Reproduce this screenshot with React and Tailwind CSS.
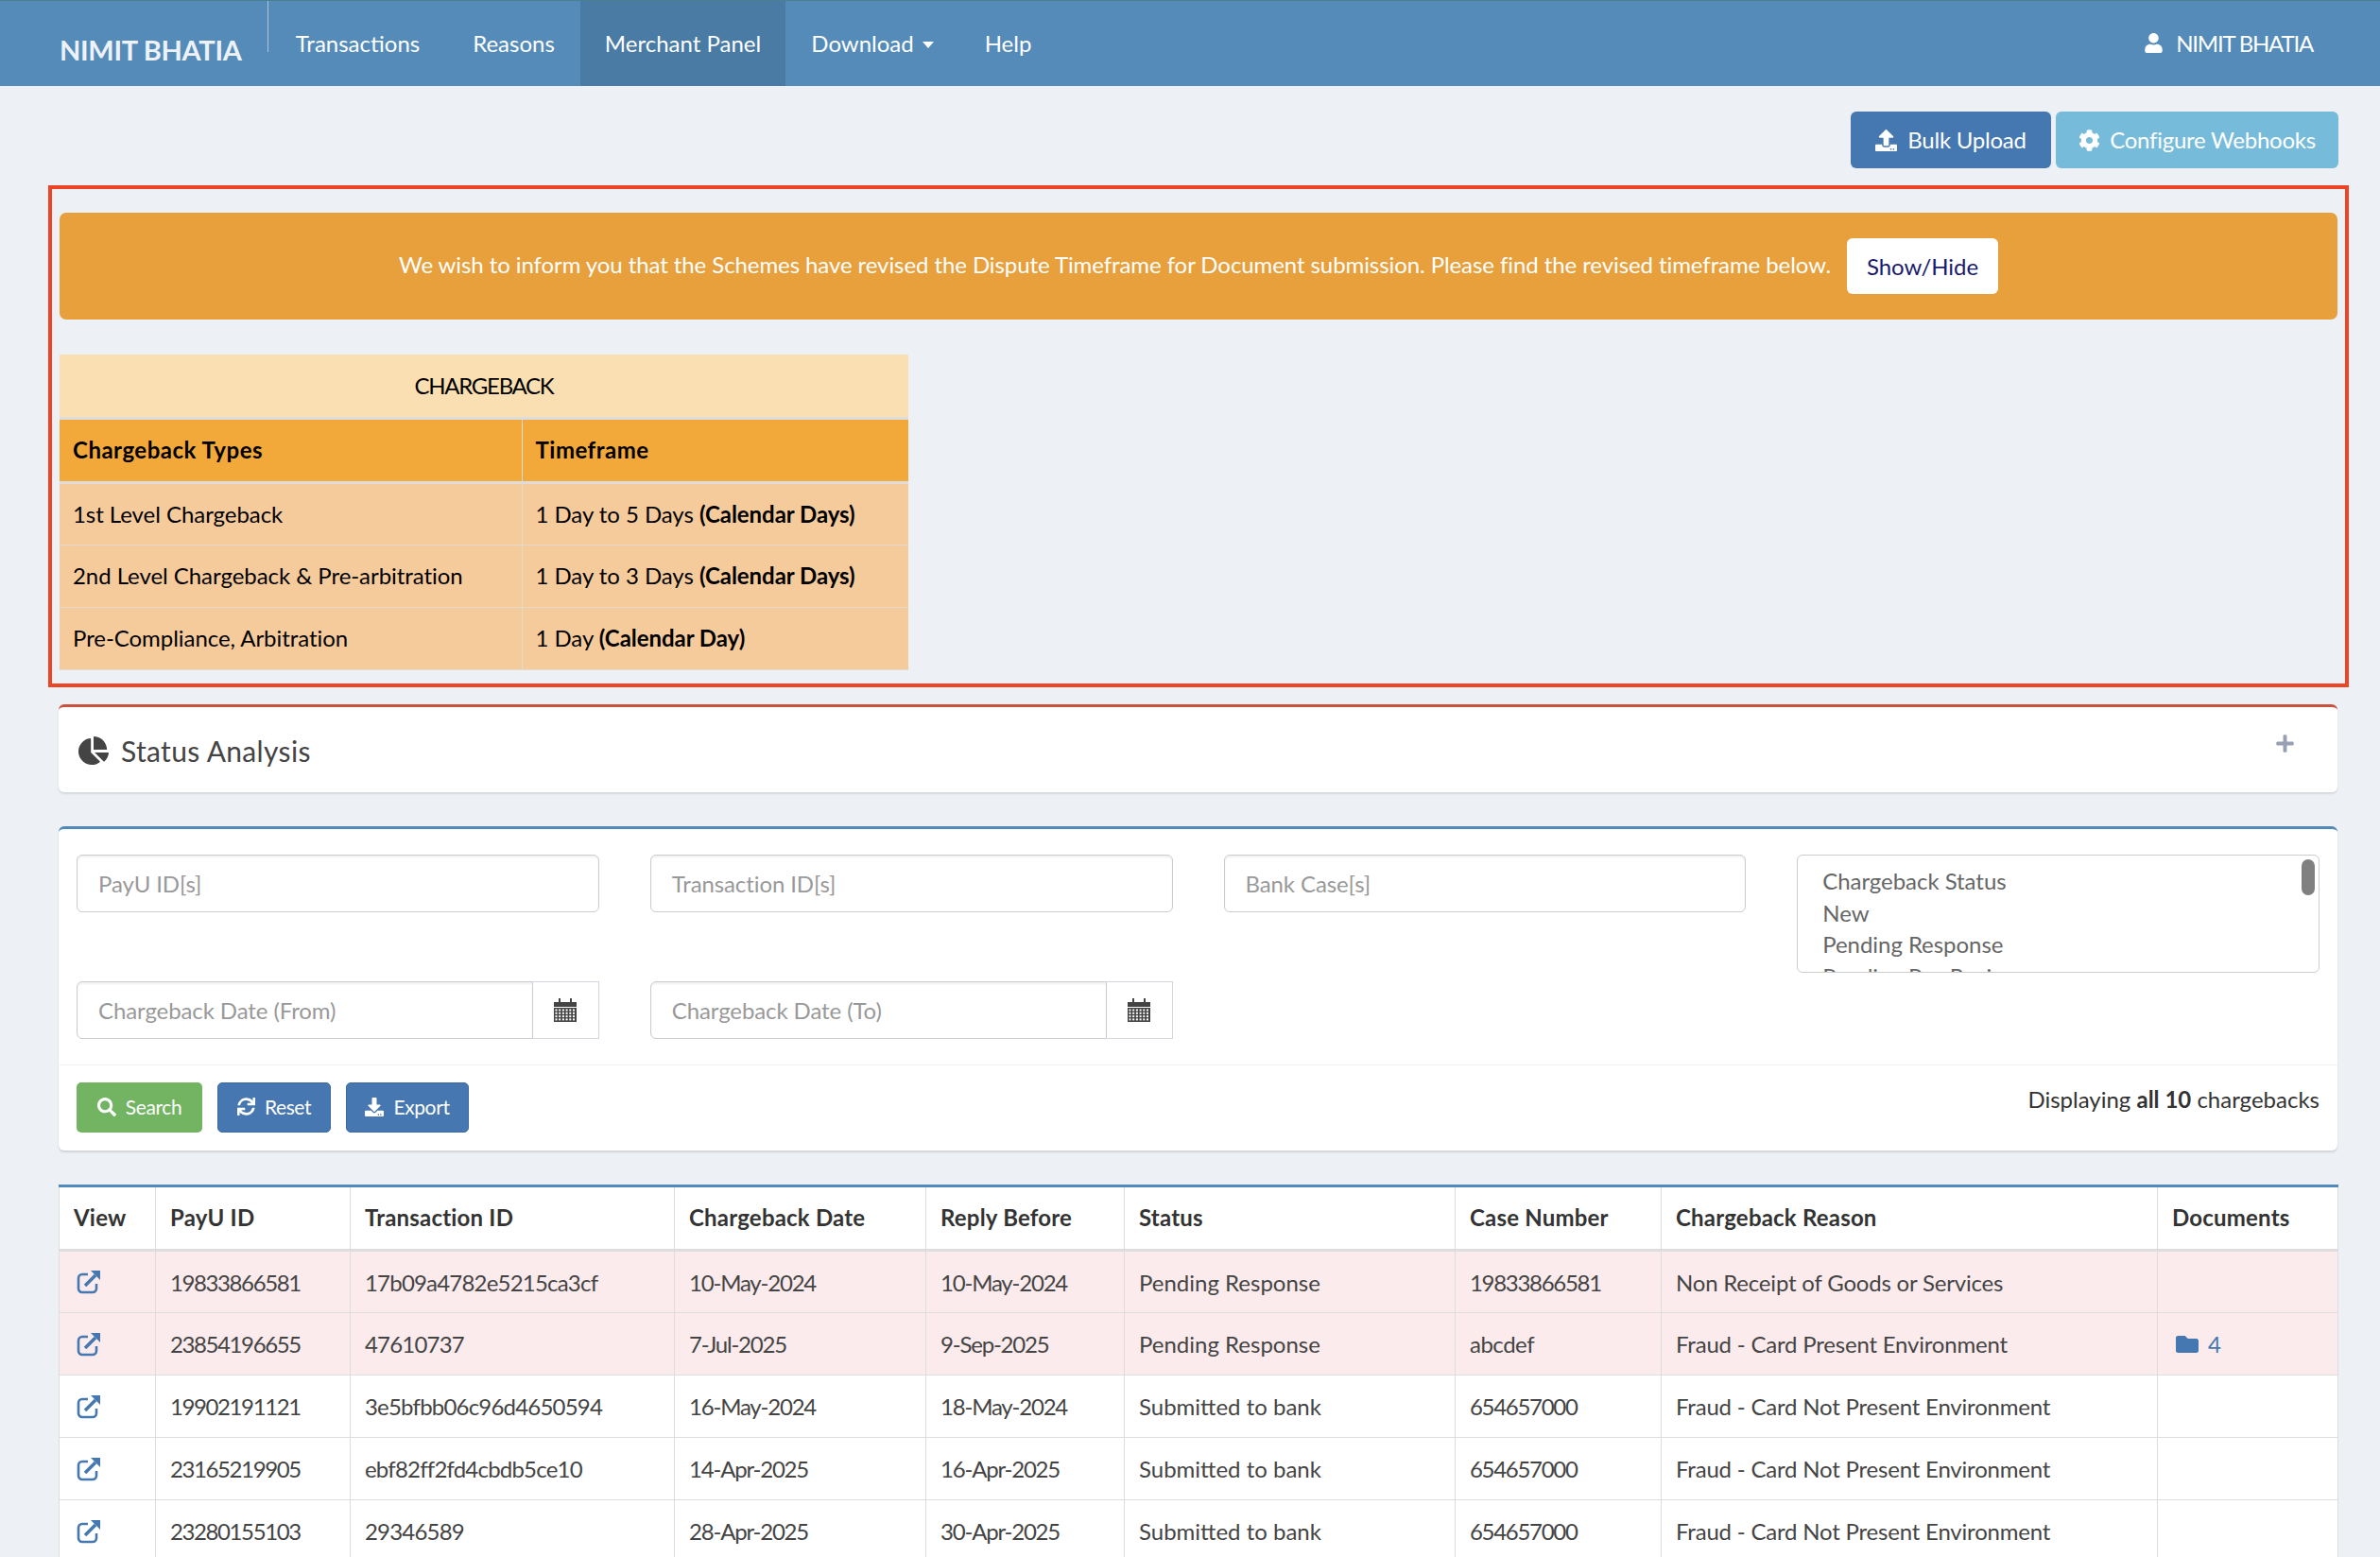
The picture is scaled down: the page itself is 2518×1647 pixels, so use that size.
import { FaChartPie, FaCog, FaDownload, FaFolder, FaPlus, FaSearch, FaSync, FaUpload, FaUser } from 'react-icons/fa';

const NAV = [
    { label: 'Transactions', width: 'w-[189px]' },
    { label: 'Reasons', width: 'w-[141px]' },
    { label: 'Merchant Panel', width: 'w-[217px]', active: true },
    { label: 'Download', width: 'w-[184px]', caret: true },
    { label: 'Help', width: 'w-[103px]' },
];

const RULES = [
    { type: '1st Level Chargeback', days: '1 Day to 5 Days', note: '(Calendar Days)' },
    { type: '2nd Level Chargeback & Pre-arbitration', days: '1 Day to 3 Days', note: '(Calendar Days)' },
    { type: 'Pre-Compliance, Arbitration', days: '1 Day', note: '(Calendar Day)' },
];

const HEADERS = ['View', 'PayU ID', 'Transaction ID', 'Chargeback Date', 'Reply Before', 'Status', 'Case Number', 'Chargeback Reason', 'Documents'];

const ROWS = [
    { id: '19833866581', txn: '17b09a4782e5215ca3cf', date: '10-May-2024', reply: '10-May-2024', status: 'Pending Response', caseNo: '19833866581', reason: 'Non Receipt of Goods or Services', pending: true },
    { id: '23854196655', txn: '47610737', date: '7-Jul-2025', reply: '9-Sep-2025', status: 'Pending Response', caseNo: 'abcdef', reason: 'Fraud - Card Present Environment', pending: true, docs: 4 },
    { id: '19902191121', txn: '3e5bfbb06c96d4650594', date: '16-May-2024', reply: '18-May-2024', status: 'Submitted to bank', caseNo: '654657000', reason: 'Fraud - Card Not Present Environment' },
    { id: '23165219905', txn: 'ebf82ff2fd4cbdb5ce10', date: '14-Apr-2025', reply: '16-Apr-2025', status: 'Submitted to bank', caseNo: '654657000', reason: 'Fraud - Card Not Present Environment' },
    { id: '23280155103', txn: '29346589', date: '28-Apr-2025', reply: '30-Apr-2025', status: 'Submitted to bank', caseNo: '654657000', reason: 'Fraud - Card Not Present Environment' },
];

const inputClass = 'min-w-0 w-full h-[61px] px-[22px] bg-white border border-[#cccccc] text-[24px] tracking-[-0.1px] placeholder:text-[#999999] shadow-[inset_0_2px_2px_rgba(0,0,0,0.06)] outline-none';

const cellClass = 'px-[15px] pt-[1px] border-x border-[#dddddd] whitespace-nowrap';

// FA4 external-link, the package only has the newer one
const ExternalLink = () => (
    <svg viewBox="0 0 26 26" className="w-[26px] h-[26px] text-[#4577b0]" fill="none" stroke="currentColor">
        <path d="M21 15v5a4 4 0 0 1-4 4H6a4 4 0 0 1-4-4V9a4 4 0 0 1 4-4h6" strokeWidth="2.6" />
        <path d="M9 17 20 6" strokeWidth="3.6" />
        <path d="M15 1h10v10z" fill="currentColor" stroke="none" />
    </svg>
);

// FA4 calendar: dark header with two ticks over a dense grid
const CalendarIcon = () => (
    <svg viewBox="0 0 24 25" className="w-[24px] h-[25px]" fill="#444444">
        <path d="M0 4h5V0h2v4h10V0h2v4h5v5H0z" />
        <rect y="10" width="24" height="15" />
        {[0, 1, 2, 3].map((row) => (
            [0, 1, 2, 3, 4, 5].map((col) => (
                <rect key={`${row}-${col}`} x={1.5 + col * 3.7} y={11.5 + row * 3.3} width="2" height="2" fill="#ffffff" />
            ))
        ))}
    </svg>
);

const DateInput = ({ placeholder }) => (
    <div className="flex h-[61px]">
        <input className={`${inputClass} rounded-l-[6px]`} placeholder={placeholder} readOnly />
        <span className="w-[70px] shrink-0 flex items-center justify-center border border-l-0 border-[#d2d6de] bg-white">
            <CalendarIcon />
        </span>
    </div>
);

const ActionButton = ({ className, icon, children }) => (
    <button className={`h-[53px] pb-[2px] flex items-center justify-center gap-[10px] rounded-[5px] text-white text-[21px] tracking-[-0.4px] ${className}`}>
        {icon}
        {children}
    </button>
);

export default function App() {
    return (
        <div className="h-[1647px] overflow-hidden bg-[#edf0f5] text-[#333333] font-['Lato','Liberation_Sans',sans-serif]">

            <nav className="h-[91px] flex justify-between bg-[#548bb9] border-t border-[#4a8090] text-white text-[24px]">
                <div className="flex">
                    <div className="w-[284px] h-[54px] pl-[63px] border-r border-[#a9c5dc]">
                        <span className="block pt-[35px] text-[29px] leading-[34px] font-bold text-[#edf2f7] tracking-[-0.3px] whitespace-nowrap">NIMIT BHATIA</span>
                    </div>
                    {NAV.map((item) => (
                        <a key={item.label} className={`${item.width} flex items-center justify-center gap-[9px] pb-[1px] ${item.active ? 'bg-[#497ba5]' : ''}`}>
                            {item.label}
                            {item.caret && <span className="mt-[3px] border-x-[6px] border-t-[7px] border-x-transparent border-t-white" />}
                        </a>
                    ))}
                </div>
                <div className="flex items-center gap-[13px] pr-[71px] pb-[1px] tracking-[-1.2px]">
                    <FaUser className="text-[21px]" />
                    NIMIT BHATIA
                </div>
            </nav>

            <main className="pl-[51px] pr-[33px] pt-[27px]">

                <div className="flex justify-end gap-[5px] pr-[11px] text-white text-[24px] tracking-[-0.25px]">
                    <button className="w-[212px] h-[60px] flex items-center justify-center gap-[11px] rounded-[6px] bg-[#4577b0]">
                        <FaUpload className="text-[23px]" />
                        Bulk Upload
                    </button>
                    <button className="w-[299px] h-[60px] flex items-center justify-center gap-[10px] rounded-[6px] bg-[#77bbdb]">
                        <FaCog className="text-[23px]" />
                        Configure Webhooks
                    </button>
                </div>

                <section className="mt-[18px] h-[531px] border-4 border-[#ee4426] px-[8px] pt-[25px]">
                    <div className="h-[113px] flex items-center justify-center gap-[17px] rounded-[7px] bg-[#e8a03c] text-white text-[24px] tracking-[-0.08px]">
                        <span className="pb-[3px]">We wish to inform you that the Schemes have revised the Dispute Timeframe for Document submission. Please find the revised timeframe below.</span>
                        <button className="w-[160px] h-[59px] rounded-[6px] bg-white text-[#1a1a6e]">Show/Hide</button>
                    </div>

                    <table className="mt-[37px] w-[898px] table-fixed border-collapse text-black text-[24px] tracking-[-0.05px]">
                        <colgroup>
                            <col className="w-[489px]" />
                            <col className="w-[409px]" />
                        </colgroup>
                        <thead>
                            <tr className="h-[67px] bg-[#fadfb2] border-b-[3px] border-[#dddddd]">
                                <th colSpan="2" className="font-normal tracking-[-1.3px]">CHARGEBACK</th>
                            </tr>
                            <tr className="h-[68px] bg-[#f3a93a] border-b-[3px] border-[#dddddd] tracking-[0.5px]">
                                <th className="px-[14px] text-left font-bold border-r border-[#dddddd]">Chargeback Types</th>
                                <th className="px-[14px] text-left font-bold">Timeframe</th>
                            </tr>
                        </thead>
                        <tbody>
                            {RULES.map((rule) => (
                                <tr key={rule.type} className="h-[66px] bg-[#f6cb9c] border-b border-[#e3dbd0]">
                                    <td className="px-[14px] border-r border-[#e3dbd0] whitespace-nowrap">{rule.type}</td>
                                    <td className="px-[14px] whitespace-nowrap">{rule.days} <b>{rule.note}</b></td>
                                </tr>
                            ))}
                        </tbody>
                    </table>
                </section>

                <div className="ml-[11px] mr-[12px]">

                    <section className="mt-[18px] h-[93px] flex items-center justify-between pl-[21px] pr-[45px] bg-white rounded-[6px] border-t-[3px] border-[#cc5240] shadow-[0_2px_2px_rgba(0,0,0,0.1)]">
                        <h2 className="flex items-center gap-[13px] text-[30px] tracking-[0.35px] text-[#444444] pt-[2px]">
                            <FaChartPie className="text-[32px]" />
                            Status Analysis
                        </h2>
                        <FaPlus className="mb-[13px] text-[21px] text-[#97a0b3]" />
                    </section>

                    <section className="mt-[36px] h-[343px] bg-white rounded-[6px] border-t-[3px] border-[#5189bb] shadow-[0_2px_2px_rgba(0,0,0,0.12)]">
                        <div className="h-[249px] px-[19px] pt-[27px] grid grid-cols-4 grid-rows-[134px_61px] gap-x-[54px] items-start">
                            <input className={`${inputClass} rounded-[6px]`} placeholder="PayU ID[s]" readOnly />
                            <input className={`${inputClass} rounded-[6px]`} placeholder="Transaction ID[s]" readOnly />
                            <input className={`${inputClass} rounded-[6px]`} placeholder="Bank Case[s]" readOnly />
                            <div className="relative h-[125px] overflow-hidden rounded-[6px] border border-[#cccccc] pl-[26px] pt-[10px] text-[24px] leading-[33.5px] tracking-[-0.05px] text-[#666666]">
                                <div>Chargeback Status</div>
                                <div>New</div>
                                <div>Pending Response</div>
                                <div>Pending Pre-Review</div>
                                <span className="absolute right-[4px] top-[4px] w-[14px] h-[38px] rounded-full bg-[#808080]" />
                            </div>
                            <DateInput placeholder="Chargeback Date (From)" />
                            <DateInput placeholder="Chargeback Date (To)" />
                        </div>
                        <div className="h-[91px] px-[19px] pt-[18px] flex justify-between border-t border-[#f2f2f2]">
                            <div className="flex gap-[16px]">
                                <ActionButton className="w-[133px] bg-[#72b462]" icon={<FaSearch className="text-[20px]" />}>Search</ActionButton>
                                <ActionButton className="w-[120px] bg-[#4677b0] border border-[#3d6a9e]" icon={<FaSync className="text-[19px]" />}>Reset</ActionButton>
                                <ActionButton className="w-[130px] bg-[#4677b0] border border-[#3d6a9e]" icon={<FaDownload className="text-[20px]" />}>Export</ActionButton>
                            </div>
                            <p className="text-[24px] leading-[36px]">Displaying <b>all 10</b> chargebacks</p>
                        </div>
                    </section>

                    <table className="mt-[36px] w-full table-fixed border-collapse bg-white border-t-[3px] border-[#5189bb] text-[24px] text-[#444444]">
                        <colgroup>
                            <col className="w-[102px]" />
                            <col className="w-[206px]" />
                            <col className="w-[343px]" />
                            <col className="w-[266px]" />
                            <col className="w-[210px]" />
                            <col className="w-[350px]" />
                            <col className="w-[218px]" />
                            <col className="w-[525px]" />
                            <col className="w-[191px]" />
                        </colgroup>
                        <thead>
                            <tr className="h-[68px] border-b-[3px] border-[#dddddd] text-[#333333] tracking-[0.2px]">
                                {HEADERS.map((header) => (
                                    <th key={header} className="px-[15px] pb-[1px] text-left font-bold border-x border-[#dddddd] whitespace-nowrap">{header}</th>
                                ))}
                            </tr>
                        </thead>
                        <tbody>
                            {ROWS.map((row) => (
                                <tr key={row.id} className={`h-[66px] border-b border-[#dddddd] ${row.pending ? 'bg-[#fbebed]' : ''}`}>
                                    <td className="pl-[18px] border-x border-[#dddddd]"><ExternalLink /></td>
                                    <td className={`${cellClass} tracking-[-1.4px]`}>{row.id}</td>
                                    <td className={`${cellClass} tracking-[-0.8px]`}>{row.txn}</td>
                                    <td className={`${cellClass} tracking-[-1.2px]`}>{row.date}</td>
                                    <td className={`${cellClass} tracking-[-1.2px]`}>{row.reply}</td>
                                    <td className={cellClass}>{row.status}</td>
                                    <td className={`${cellClass} ${row.caseNo === 'abcdef' ? 'tracking-[-0.5px]' : 'tracking-[-1.3px]'}`}>{row.caseNo}</td>
                                    <td className={`${cellClass} tracking-[-0.2px]`}>{row.reason}</td>
                                    <td className={cellClass}>
                                        {row.docs && (
                                            <span className="ml-[4px] flex items-center gap-[10px] text-[#4577b0]">
                                                <FaFolder className="text-[24px]" />
                                                {row.docs}
                                            </span>
                                        )}
                                    </td>
                                </tr>
                            ))}
                        </tbody>
                    </table>

                </div>
            </main>
        </div>
    );
}
